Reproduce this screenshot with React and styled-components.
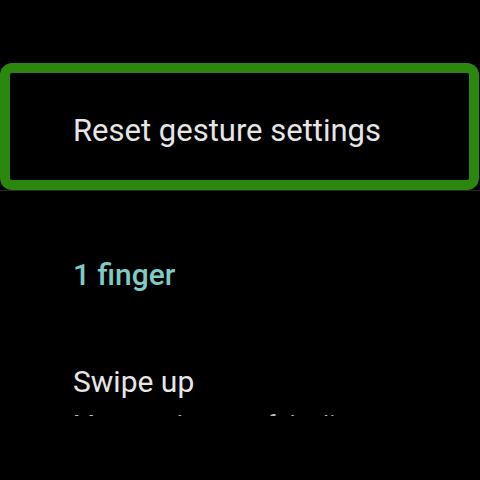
import styled, { createGlobalStyle } from 'styled-components'

const Global = createGlobalStyle`
    html, body {
        margin: 0;
        padding: 0;
        background: #000;
    }
`

const Screen = styled.div`
    width: 480px;
    height: 480px;
    overflow: hidden;
    background: #000;
    font-family: Roboto, "Liberation Sans", sans-serif;
    padding-top: 63px;
    box-sizing: border-box;
`

const FocusItem = styled.div`
    display: flex;
    align-items: center;
    box-sizing: border-box;
    width: 479px;
    height: 127px;
    border: 10px solid #2b870d;
    border-radius: 12px;
    padding: 7px 0 0 63px;
    color: #e6e6e6;
    font-size: 31px;
`

const Divider = styled.div`
    height: 1px;
    background: #262626;
`

const Section = styled.div`
    padding: 66px 0 0 73px;
    color: #80cbc4;
    font-size: 30px;
    font-weight: 500;
    line-height: 36px;
`

const Item = styled.div`
    padding: 71px 0 0 73px;
    height: 123px;
    box-sizing: border-box;
    overflow: hidden;
`

const Title = styled.div`
    color: #e6e6e6;
    font-size: 30px;
    line-height: 36px;
`

const Summary = styled.div`
    color: #bdbdbd;
    font-size: 25px;
    line-height: 30px;
    margin-top: 11px;
    white-space: nowrap;
`

export default function App() {
    return (
        <Screen>
            <Global />
            <FocusItem>Reset gesture settings</FocusItem>
            <Divider />
            <Section>1 finger</Section>
            <Item>
                <Title>Swipe up</Title>
                <Summary>Move to the top of the list</Summary>
            </Item>
        </Screen>
    )
}
